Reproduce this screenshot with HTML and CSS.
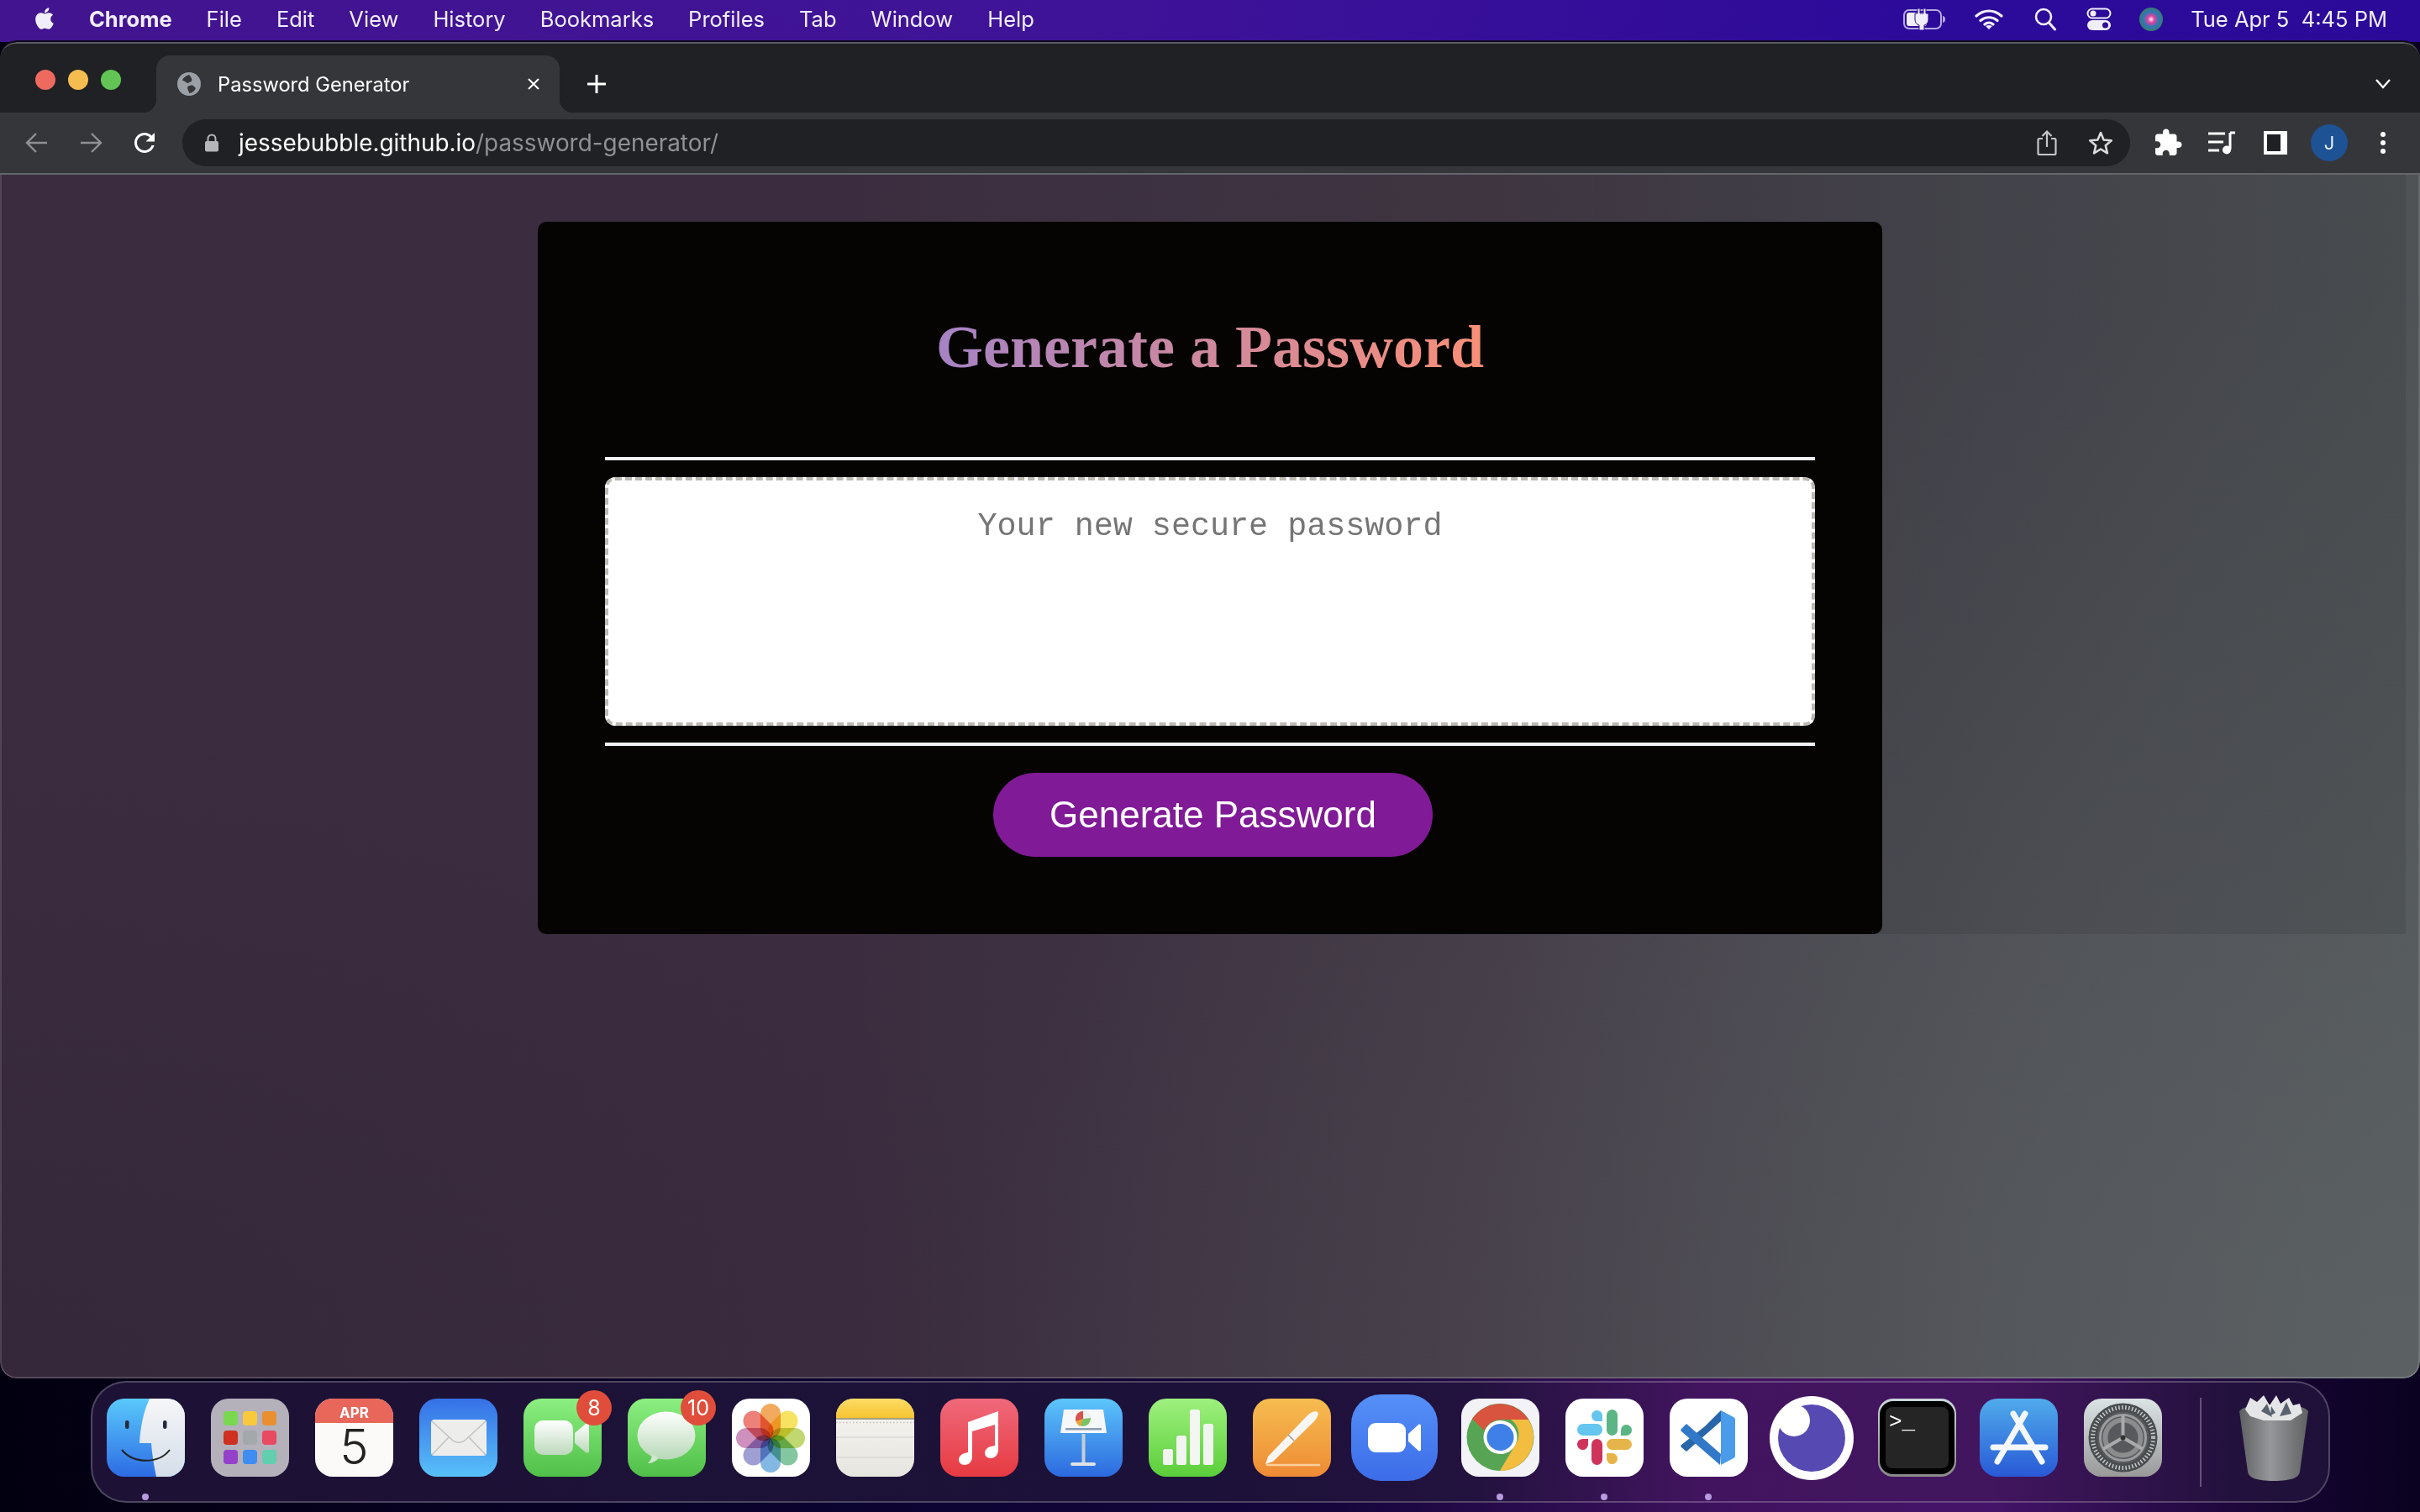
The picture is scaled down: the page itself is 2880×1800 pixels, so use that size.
FILE: index.html
```html
<!DOCTYPE html>
<html lang="en">
<head>
<meta charset="utf-8">
<title>Password Generator</title>
<link rel="stylesheet" href="styles.css">
</head>
<body>
<div class="desktop">
  <header class="menubar">
    <svg class="apple" viewBox="0 0 24 24"><path fill="#f1eefb" d="M17.05 20.28c-.98.95-2.05.8-3.08.35-1.09-.46-2.09-.48-3.24 0-1.44.62-2.2.44-3.06-.35C2.79 15.25 3.51 7.59 9.05 7.31c1.35.07 2.29.74 3.08.8 1.18-.24 2.31-.93 3.57-.84 1.51.12 2.65.72 3.4 1.8-3.12 1.87-2.38 5.98.48 7.13-.57 1.5-1.31 2.99-2.54 4.09zM12.03 7.25c-.15-2.23 1.66-4.07 3.74-4.25.29 2.58-2.34 4.5-3.74 4.25z"/></svg>
    <nav class="menus">
      <span class="menu-app">Chrome</span><span>File</span><span>Edit</span><span>View</span><span>History</span><span>Bookmarks</span><span>Profiles</span><span>Tab</span><span>Window</span><span>Help</span>
    </nav>
    <div class="status">
      <svg class="st-battery" viewBox="0 0 52 26"><rect x="1" y="2" width="44" height="22" rx="6" fill="none" stroke="#b5a9e0" stroke-width="2"/><path d="M47 9c2 0 3 2 3 4s-1 4-3 4z" fill="#b5a9e0"/><rect x="4" y="5" width="24" height="16" rx="3" fill="#f1eefb"/><path d="M17 0h3v6h4V0h3v6h3v7c0 4-2 6-5 7v6h-6v-6c-3-1-5-3-5-7V6h3z" fill="#f1eefb" stroke="#2c0c98" stroke-width="1"/></svg>
      <svg class="st-wifi" viewBox="0 0 34 26"><path d="M2 9c9-8 21-8 30 0M7 14.500c6-5 14-5 20 0M12 19c3-2.500 7-2.500 10 0" fill="none" stroke="#f1eefb" stroke-width="3.200" stroke-linecap="round"/><path d="M17 25l-4-4c2.500-1.500 5.500-1.500 8 0z" fill="#f1eefb"/></svg>
      <svg class="st-search" viewBox="0 0 26 28"><circle cx="11" cy="11" r="9" fill="none" stroke="#f1eefb" stroke-width="2.600"/><path d="M17.500 18l7 8" stroke="#f1eefb" stroke-width="3" stroke-linecap="round"/></svg>
      <svg class="st-control" viewBox="0 0 30 28"><rect x="1.500" y="1.500" width="27" height="11" rx="5.500" fill="none" stroke="#f1eefb" stroke-width="2"/><circle cx="8" cy="7" r="3.500" fill="#f1eefb"/><rect x="1" y="15" width="28" height="12" rx="6" fill="#f1eefb"/><circle cx="22.500" cy="21" r="3.500" fill="#2c0c98"/></svg>
      <svg class="st-siri" viewBox="0 0 28 28"><defs><radialGradient id="siri"><stop offset="0" stop-color="#f7e9ff"/><stop offset=".3" stop-color="#e0429c"/><stop offset=".65" stop-color="#2a78b8"/><stop offset="1" stop-color="#3d7a6e"/></radialGradient></defs><circle cx="14" cy="14" r="14" fill="url(#siri)"/></svg>
      <span class="clock">Tue Apr 5&nbsp; 4:45 PM</span>
    </div>
  </header>

  <main class="window">
    <div class="titlebar">
      <div class="lights"><i class="light red"></i><i class="light yellow"></i><i class="light green"></i></div>
      <div class="tab">
        <svg class="favicon" viewBox="0 0 28 28"><circle cx="14" cy="14" r="14" fill="#9aa0a6"/><path d="M14 3c-3 1-7 3-8 7 3 0 4 2 6 3 2 0 3-2 5-2 1-2 0-5-3-8zM19 16c-3-1-6 0-7 2 0 3 2 4 2 7 3 0 7-3 8-6-1-1-2-2-3-3z" fill="#35363a"/></svg>
        <span class="tab-title">Password Generator</span>
        <svg class="tab-close" viewBox="0 0 16 16"><path d="M2 2l12 12M14 2L2 14" stroke="#fff" stroke-width="2"/></svg>
      </div>
      <svg class="newtab" viewBox="0 0 24 24"><path d="M12 1v22M1 12h22" stroke="#fff" stroke-width="3"/></svg>
      <svg class="tabs-menu" viewBox="0 0 20 14"><path d="M2 2l8 9 8-9" fill="none" stroke="#fff" stroke-width="2.400"/></svg>
    </div>
    <div class="toolbar">
      <div class="slot"><svg class="ico28" viewBox="0 0 28 28"><path d="M26 14H3M13 3L2 14l11 11" fill="none" stroke="#8f9195" stroke-width="2.400"/></svg></div>
      <div class="slot"><svg class="ico28" viewBox="0 0 28 28"><path d="M2 14h23M15 3l11 11-11 11" fill="none" stroke="#8f9195" stroke-width="2.400"/></svg></div>
      <div class="slot"><svg class="ico34" viewBox="0 0 24 24"><path fill="#fff" d="M17.650 6.350C16.200 4.900 14.210 4 12 4c-4.420 0-7.990 3.580-7.990 8s3.570 8 7.990 8c3.730 0 6.840-2.550 7.730-6h-2.080c-.82 2.330-3.040 4-5.650 4-3.310 0-6-2.690-6-6s2.690-6 6-6c1.660 0 3.140.69 4.220 1.780L13 11h7V4l-2.350 2.350z"/></svg></div>
      <div class="omnibox">
        <svg class="lock" viewBox="0 0 18 22"><path d="M4.500 9V6a4.500 4.500 0 0 1 9 0v3" fill="none" stroke="#b4b6b9" stroke-width="2"/><rect x="1" y="9" width="16" height="12.500" rx="2" fill="#b4b6b9"/></svg>
        <div class="url"><span class="host">jessebubble.github.io</span><span class="path">/password-generator/</span></div>
        <div class="omni-actions">
          <div class="slot"><svg class="ico-share" viewBox="0 0 24 32"><path d="M7 11H3a1.500 1.500 0 0 0-1.500 1.500v16A1.500 1.500 0 0 0 3 30h18a1.500 1.500 0 0 0 1.500-1.500v-16A1.500 1.500 0 0 0 21 11h-4M12 21V3M6.500 8L12 2.500 17.500 8" fill="none" stroke="#c6c7c9" stroke-width="2.200"/></svg></div>
          <div class="slot"><svg class="ico-star" viewBox="0 0 30 30"><path d="M15 3l3.600 8.500 9.200.8-7 6 2.100 9L15 22.500 7.100 27.300l2.100-9-7-6 9.200-.8z" fill="none" stroke="#dadbdc" stroke-width="2.600" stroke-linejoin="round"/></svg></div>
        </div>
      </div>
      <div class="slot"><svg class="ico34" viewBox="0 0 24 24"><path fill="#fff" d="M20.500 11H19V7c0-1.100-.9-2-2-2h-4V3.500C13 2.120 11.880 1 10.500 1S8 2.120 8 3.500V5H4c-1.100 0-1.990.9-1.990 2v3.800H3.500c1.490 0 2.700 1.210 2.700 2.700s-1.210 2.700-2.700 2.700H2V20c0 1.100.9 2 2 2h3.800v-1.500c0-1.490 1.210-2.700 2.700-2.700 1.490 0 2.700 1.210 2.700 2.700V22H17c1.100 0 2-.9 2-2v-4h1.500c1.380 0 2.500-1.120 2.500-2.500S21.880 11 20.500 11z"/></svg></div>
      <div class="slot"><svg class="ico-media" viewBox="0 0 34 28"><path d="M1 3h20M1 13h18M1 23h13" stroke="#fff" stroke-width="3"/><path d="M27 2h6M27 2v20" fill="none" stroke="#fff" stroke-width="3"/><ellipse cx="23" cy="22.500" rx="5" ry="5" fill="#fff"/></svg></div>
      <div class="slot"><div class="ico-side"></div></div>
      <div class="slot"><div class="avatar">J</div></div>
      <div class="slot"><svg class="ico-dots" viewBox="0 0 8 28"><circle cx="4" cy="4" r="3" fill="#fff"/><circle cx="4" cy="14" r="3" fill="#fff"/><circle cx="4" cy="24" r="3" fill="#fff"/></svg></div>
    </div>
    <div class="viewport">
      <div class="page">
        <section class="card">
          <h1 class="card-head"><span class="gradient-title">Generate a Password</span></h1>
          <hr class="rule">
          <div class="password-box">Your new secure password</div>
          <hr class="rule rule-low">
          <div class="card-foot"><button class="generate" type="button">Generate Password</button></div>
        </section>
      </div>
    </div>
  </main>

  <footer class="dock">
    <div class="app dot"><svg viewBox="0 0 93 93"><defs><linearGradient id="fb" x1="0" y1="0" x2="0" y2="1"><stop offset="0" stop-color="#5ac9fb"/><stop offset="1" stop-color="#2d6be4"/></linearGradient><linearGradient id="fw" x1="0" y1="0" x2="0" y2="1"><stop offset="0" stop-color="#f6f6f8"/><stop offset="1" stop-color="#d4deea"/></linearGradient></defs><rect width="93" height="93" rx="21" fill="url(#fb)"/><path d="M51 0h21a21 21 0 0 1 21 21v51a21 21 0 0 1-21 21H59c-3-13-5-27-6-40H39c1-20 5-38 12-53z" fill="url(#fw)"/><rect x="22" y="26" width="4.500" height="10" rx="2.200" fill="#222a3c"/><rect x="67" y="26" width="4.500" height="10" rx="2.200" fill="#222a3c"/><path d="M18 61c14 17 44 17 57 0" fill="none" stroke="#222" stroke-width="2"/></svg></div>
    <div class="app"><svg viewBox="0 0 93 93"><rect width="93" height="93" rx="21" fill="#b4b1bb"/><rect x="15" y="15" width="17" height="17" rx="4" fill="#79d750"/><rect x="38" y="15" width="17" height="17" rx="4" fill="#f8c93d"/><rect x="61" y="15" width="17" height="17" rx="4" fill="#e98f30"/><rect x="15" y="38" width="17" height="17" rx="4" fill="#cf3120"/><rect x="38" y="38" width="17" height="17" rx="4" fill="#a3a8ab"/><rect x="61" y="38" width="17" height="17" rx="4" fill="#e84a62"/><rect x="15" y="61" width="17" height="17" rx="4" fill="#9440c9"/><rect x="38" y="61" width="17" height="17" rx="4" fill="#3f8df1"/><rect x="61" y="61" width="17" height="17" rx="4" fill="#61cfae"/></svg></div>
    <div class="app"><svg viewBox="0 0 93 93"><rect width="93" height="93" rx="21" fill="#fbfaf8"/><path d="M0 29V21A21 21 0 0 1 21 0h51a21 21 0 0 1 21 21v8z" fill="#e8665a"/><text class="cal-month" x="46.500" y="23" text-anchor="middle">APR</text><text class="cal-day" x="46.500" y="78" text-anchor="middle">5</text></svg></div>
    <div class="app"><svg viewBox="0 0 93 93"><defs><linearGradient id="ml" x1="0" y1="0" x2="0" y2="1"><stop offset="0" stop-color="#3570e6"/><stop offset="1" stop-color="#58c0f9"/></linearGradient></defs><rect width="93" height="93" rx="21" fill="url(#ml)"/><rect x="14" y="25" width="66" height="43" rx="4" fill="#ededec"/><path d="M15 27l25 23c4 3 10 3 14 0l25-23M15 67l20-21M79 67L59 46" fill="none" stroke="#c2c2c2" stroke-width="1.500"/></svg></div>
    <div class="app"><svg viewBox="0 0 93 93"><defs><linearGradient id="fa" x1="0" y1="0" x2="0" y2="1"><stop offset="0" stop-color="#8bef81"/><stop offset="1" stop-color="#50bf48"/></linearGradient><linearGradient id="fc" x1="0" y1="0" x2="0" y2="1"><stop offset="0" stop-color="#fff"/><stop offset="1" stop-color="#bcd9bc"/></linearGradient></defs><rect width="93" height="93" rx="21" fill="url(#fa)"/><rect x="13" y="26" width="46" height="41" rx="10" fill="url(#fc)"/><path d="M61 41l13-11c2-1.500 4-.5 4 2v30c0 2.500-2 3.500-4 2L61 53z" fill="url(#fc)"/></svg><span class="badge">8</span></div>
    <div class="app"><svg viewBox="0 0 93 93"><defs><linearGradient id="ma" x1="0" y1="0" x2="0" y2="1"><stop offset="0" stop-color="#8bef81"/><stop offset="1" stop-color="#50bf48"/></linearGradient><linearGradient id="mc" x1="0" y1="0" x2="0" y2="1"><stop offset="0" stop-color="#fff"/><stop offset="1" stop-color="#b7d8b7"/></linearGradient></defs><rect width="93" height="93" rx="21" fill="url(#ma)"/><ellipse cx="46" cy="44" rx="34.500" ry="28.500" fill="url(#mc)"/><path d="M29 66c0 4-2 8-5 11 5 0 9-2 13-6z" fill="#cfe6cf"/></svg><span class="badge">10</span></div>
    <div class="app"><svg viewBox="0 0 93 93"><rect width="93" height="93" rx="21" fill="#fff"/><g class="petals"><rect x="34" y="6" width="24" height="41" rx="12" fill="#f0993a"/><rect x="34" y="6" width="24" height="41" rx="12" fill="#f6dc3e" transform="rotate(45 46 47)"/><rect x="34" y="6" width="24" height="41" rx="12" fill="#b3cf50" transform="rotate(90 46 47)"/><rect x="34" y="6" width="24" height="41" rx="12" fill="#69b98a" transform="rotate(135 46 47)"/><rect x="34" y="6" width="24" height="41" rx="12" fill="#67a8e0" transform="rotate(180 46 47)"/><rect x="34" y="6" width="24" height="41" rx="12" fill="#8b8acb" transform="rotate(225 46 47)"/><rect x="34" y="6" width="24" height="41" rx="12" fill="#c379b0" transform="rotate(270 46 47)"/><rect x="34" y="6" width="24" height="41" rx="12" fill="#e9645a" transform="rotate(315 46 47)"/></g></svg></div>
    <div class="app"><svg viewBox="0 0 93 93"><defs><linearGradient id="ny" x1="0" y1="0" x2="0" y2="1"><stop offset="0" stop-color="#fddc66"/><stop offset="1" stop-color="#f7c430"/></linearGradient><linearGradient id="nb" x1="0" y1="0" x2="0" y2="1"><stop offset="0" stop-color="#f6f5f1"/><stop offset="1" stop-color="#e6e5df"/></linearGradient></defs><rect width="93" height="93" rx="21" fill="url(#nb)"/><path d="M0 23v-2A21 21 0 0 1 21 0h51a21 21 0 0 1 21 21v2z" fill="url(#ny)"/><path d="M0 24h93" stroke="#a89f86" stroke-width="2"/><path d="M0 28.500h93" stroke="#c3c1ba" stroke-width="1.500" stroke-dasharray="1.500 2.500"/><path d="M0 46h93M0 70h93" stroke="#dadad6" stroke-width="1.500"/></svg></div>
    <div class="app"><svg viewBox="0 0 93 93"><defs><linearGradient id="mu" x1="0" y1="0" x2="0" y2="1"><stop offset="0" stop-color="#f0697b"/><stop offset="1" stop-color="#e63a41"/></linearGradient></defs><rect width="93" height="93" rx="21" fill="url(#mu)"/><path d="M33 28l36-13v46c0 6-4 10-9 10-4 0-7-3-7-6 0-4 3-7 7-8l5-1V31L38 39v30c0 6-4 10-9 10-4 0-7-3-7-6 0-4 3-7 7-8l4-1z" fill="#fff"/></svg></div>
    <div class="app"><svg viewBox="0 0 93 93"><defs><linearGradient id="kn" x1="0" y1="0" x2="0" y2="1"><stop offset="0" stop-color="#5cc5fb"/><stop offset="1" stop-color="#2c69df"/></linearGradient></defs><rect width="93" height="93" rx="21" fill="url(#kn)"/><rect x="44.500" y="42" width="4" height="36" fill="#c5ced6"/><rect x="31" y="76" width="30" height="4" rx="2" fill="#dfe3e6"/><path d="M23 13h47l4 28H19z" fill="#f6f7f9"/><rect x="25" y="35" width="43" height="2.500" fill="#8a9db3"/><circle cx="46" cy="24" r="9" fill="#7cc266"/><path d="M46 24V15a9 9 0 0 0-8.500 12z" fill="#d9534f"/><path d="M46 24l-8.500 3a9 9 0 0 0 5 6z" fill="#f0a23a"/><path d="M46 24V15a9 9 0 0 1 9 8z" fill="#f1f1f1"/></svg></div>
    <div class="app"><svg viewBox="0 0 93 93"><defs><linearGradient id="nu" x1="0" y1="0" x2="0" y2="1"><stop offset="0" stop-color="#9ef07e"/><stop offset="1" stop-color="#5bce3a"/></linearGradient></defs><rect width="93" height="93" rx="21" fill="url(#nu)"/><rect x="17" y="60" width="12" height="19" rx="2.500" fill="#f1f4ef"/><rect x="33" y="44" width="12" height="35" rx="2.500" fill="#f1f4ef"/><rect x="49" y="13" width="12" height="66" rx="2.500" fill="#f4f6f2"/><rect x="65" y="30" width="12" height="49" rx="2.500" fill="#f1f4ef"/></svg></div>
    <div class="app"><svg viewBox="0 0 93 93"><defs><linearGradient id="pg" x1="0" y1="0" x2="0" y2="1"><stop offset="0" stop-color="#f6bd50"/><stop offset="1" stop-color="#ee8b35"/></linearGradient></defs><rect width="93" height="93" rx="21" fill="url(#pg)"/><path d="M17 79h62" stroke="#f9cf9c" stroke-width="2.600" stroke-linecap="round"/><path d="M15 78l3-9L65 20c4-4 10-6 12-4 2 3-1 8-5 12L24 75z" fill="#f7f6f3"/><path d="M42 43l7 7" stroke="#9a9a94" stroke-width="1.500"/></svg></div>
    <div class="app app-wide"><svg viewBox="0 0 103 103"><defs><linearGradient id="zm" x1="0" y1="0" x2="0" y2="1"><stop offset="0" stop-color="#5590f7"/><stop offset="1" stop-color="#3c6ce8"/></linearGradient></defs><rect width="103" height="103" rx="35" fill="url(#zm)"/><rect x="20" y="34" width="45" height="35" rx="9" fill="#fff"/><path d="M68 47l12-11c1.500-1 3-.5 3 1.500v28c0 2-1.500 2.500-3 1.500L68 56z" fill="#fff"/></svg></div>
    <div class="app dot"><svg viewBox="0 0 93 93"><rect width="93" height="93" rx="21" fill="#f3f2f6"/><circle cx="46.500" cy="46" r="40" fill="#57a554"/><path d="M13 24A40 40 0 0 1 80 25H46.500a21 21 0 0 0-19 13z" fill="#d8543e"/><path d="M80 25a40 40 0 0 1-34 61l19-32a21 21 0 0 0-6-29z" fill="#f3bd40"/><circle cx="46.500" cy="46" r="20" fill="#fff"/><circle cx="46.500" cy="46" r="16" fill="#3f7fe8"/></svg></div>
    <div class="app dot"><svg viewBox="0 0 93 93"><rect width="93" height="93" rx="21" fill="#fff"/><rect x="14" y="30" width="30" height="14" rx="7" fill="#64c5ee"/><path d="M44 27v-7a6.500 6.500 0 1 0-6.500 7z" fill="#64c5ee"/><rect x="49" y="13" width="13" height="31" rx="6.500" fill="#5bb585"/><path d="M66 44h7a6.500 6.500 0 1 0-7-6.500z" fill="#5bb585"/><rect x="49" y="48" width="30" height="13" rx="6.500" fill="#e6b54a"/><path d="M49 65v7a6.500 6.500 0 1 0 6.500-7z" fill="#e6b54a"/><rect x="31" y="48" width="13" height="31" rx="6.500" fill="#cf335c"/><path d="M27 48h-6.500a6.500 6.500 0 1 0 6.500 7z" fill="#cf335c"/></svg></div>
    <div class="app dot"><svg viewBox="0 0 93 93"><rect width="93" height="93" rx="21" fill="#fff"/><path d="M61 14v13L20 63l-6-5c-1-1-1-2 0-3l28-22z" fill="#2866a9"/><path d="M14 36c-1 1-1 2 0 3l46 40 1-13L20 30z" fill="#3179c8"/><path d="M61 14l15 8c1.500 1 2 2 2 3v43c0 1-.5 2-2 3l-15 8z" fill="#4a9bea"/></svg></div>
    <div class="app app-orbit"><svg viewBox="0 0 100 100"><circle cx="50" cy="50" r="50" fill="#fff"/><circle cx="50" cy="50" r="40" fill="#564ab2"/><circle cx="29" cy="29" r="19" fill="#fff"/></svg></div>
    <div class="app app-term"><svg viewBox="0 0 93 93"><defs><linearGradient id="tm" x1="0" y1="0" x2="0" y2="1"><stop offset="0" stop-color="#c9d6da"/><stop offset="1" stop-color="#8a8a88"/></linearGradient></defs><rect width="93" height="93" rx="18" fill="url(#tm)"/><rect x="2" y="3" width="89" height="87" rx="16" fill="#000"/><rect x="9" y="10" width="75" height="73" rx="8" fill="#252525"/><text class="term-text" x="13" y="35">&gt;_</text></svg></div>
    <div class="app"><svg viewBox="0 0 93 93"><defs><linearGradient id="as" x1="0" y1="0" x2="0" y2="1"><stop offset="0" stop-color="#50abeb"/><stop offset="1" stop-color="#2859d6"/></linearGradient></defs><rect width="93" height="93" rx="21" fill="url(#as)"/><path d="M40 18l34 57M54 18L21 75" stroke="#f4f7fb" stroke-width="7" stroke-linecap="round"/><path d="M16 58h62" stroke="#f4f7fb" stroke-width="7" stroke-linecap="round"/></svg></div>
    <div class="app"><svg viewBox="0 0 93 93"><defs><linearGradient id="sp" x1="0" y1="0" x2="0" y2="1"><stop offset="0" stop-color="#dbe3e5"/><stop offset="1" stop-color="#999"/></linearGradient></defs><rect width="93" height="93" rx="21" fill="url(#sp)"/><circle cx="46.500" cy="46.500" r="41" fill="#4a4d50"/><circle cx="46.500" cy="46.500" r="36" fill="none" stroke="#c9cbcc" stroke-width="5" stroke-dasharray="1.500 2.500"/><circle cx="46.500" cy="46.500" r="31" fill="#57595c"/><circle cx="46.500" cy="46.500" r="27" fill="none" stroke="#9a9c9e" stroke-width="3"/><circle cx="46.500" cy="46.500" r="21" fill="none" stroke="#8a8c8e" stroke-width="6"/><path d="M46.500 46.500V20M46.500 46.500L70 60M46.500 46.500L23 60" stroke="#a8aaab" stroke-width="4"/><circle cx="46.500" cy="46.500" r="3" fill="#333"/></svg></div>
    <div class="dock-sep"></div>
    <div class="app app-trash"><svg viewBox="0 0 82 107"><defs><linearGradient id="tr" x1="0" y1="0" x2="1" y2="0"><stop offset="0" stop-color="#5e6062"/><stop offset=".45" stop-color="#95979a"/><stop offset="1" stop-color="#5f6163"/></linearGradient></defs><path d="M0 24c4-6 20-8 41-8s37 2 41 8l-10 72c-1 7-10 11-31 11S11 103 10 96z" fill="url(#tr)"/><path d="M7 22l6-14 8 5 8-8 7 12 8-12 5 10 10-7 5 9 8-2 3 11-14 9-32 0-16-5z" fill="#e4e5e6"/><path d="M26 24l7-9 6 16zM48 30l8-17 6 14zM38 18l5 8-6 3z" fill="#5a6270"/></svg></div>
  </footer>
</div>
</body>
</html>
```

FILE: styles.css
```css
* { box-sizing: border-box; }
html, body { margin: 0; padding: 0; }
body { width: 2880px; height: 1800px; overflow: hidden; font-family: "Inter", "Liberation Sans", sans-serif; }

.desktop {
  width: 2880px;
  height: 1800px;
  display: flex;
  flex-direction: column;
  background: linear-gradient(90deg, #02000f 0%, #0b0330 35%, #15053c 55%, #40125f 72%, #45146a 82%, #14042f 95%, #0a0220 100%);
}

/* Menu bar */
.menubar {
  height: 50px;
  flex: none;
  display: flex;
  align-items: center;
  padding: 0 39px 5px 36px;
  background: linear-gradient(90deg, #42148f 0%, #3f1398 45%, #2c0a9a 80%, #2b0a99 100%);
  color: #f1eefb;
  font-size: 25.500px;
}
.apple { width: 34px; height: 34px; margin-top: -2px; }
.menus { display: flex; gap: 41px; margin-left: 36px; }
.menu-app { font-weight: 700; }
.status { margin-left: auto; display: flex; align-items: center; }
.st-battery { width: 52px; height: 26px; }
.st-wifi { width: 34px; height: 26px; margin-left: 33px; }
.st-search { width: 26px; height: 28px; margin-left: 37px; }
.st-control { width: 30px; height: 28px; margin-left: 36px; }
.st-siri { width: 28px; height: 28px; margin-left: 33px; }
.clock { margin-left: 33px; white-space: nowrap; }

/* Window */
.window {
  height: 1591px;
  flex: none;
  display: flex;
  flex-direction: column;
  border-radius: 20px;
  overflow: hidden;
  box-shadow: 0 -2px 0 #100a20;
}
.titlebar {
  height: 84px;
  flex: none;
  display: flex;
  align-items: flex-end;
  background: #202124;
  border-top: 2px solid #5b5c5f;
  border-radius: 20px 20px 0 0;
}
.lights { display: flex; gap: 15px; align-self: flex-start; margin: 31px 0 0 42px; }
.light { width: 24px; height: 24px; border-radius: 50%; }
.red { background: #ee6a5f; }
.yellow { background: #f5bd4f; }
.green { background: #61c454; }
.tab {
  width: 480px;
  height: 68px;
  margin-left: 42px;
  background: #35363a;
  border-radius: 16px 16px 0 0;
  display: flex;
  align-items: center;
  padding: 0 24px 0 25px;
  color: #fff;
  font-size: 23.700px;
  position: relative;
}
.tab::before,
.tab::after {
  content: "";
  position: absolute;
  bottom: 0;
  width: 16px;
  height: 16px;
}
.tab::before { left: -16px; background: radial-gradient(circle at 0 0, transparent 16px, #35363a 16.500px); }
.tab::after { right: -16px; background: radial-gradient(circle at 100% 0, transparent 16px, #35363a 16.500px); }
.favicon { width: 28px; height: 28px; flex: none; }
.tab-title { margin-left: 20px; white-space: nowrap; }
.tab-close { width: 16px; height: 16px; margin-left: auto; margin-right: -1px; }
.newtab { width: 24px; height: 24px; margin: 0 0 22px 32px; }
.tabs-menu { width: 20px; height: 14px; margin: 0 34px 27px auto; }

/* Toolbar */
.toolbar {
  height: 74px;
  flex: none;
  display: flex;
  align-items: flex-start;
  padding: 0 12px;
  background: #35363a;
  border-bottom: 2px solid #65666a;
}
.slot { width: 64px; height: 72px; flex: none; display: flex; align-items: center; justify-content: center; }
.ico28 { width: 28px; height: 28px; }
.ico34 { width: 36px; height: 36px; }
.ico-share { width: 24px; height: 32px; }
.ico-star { width: 30px; height: 30px; }
.ico-media { width: 34px; height: 28px; }
.ico-side { width: 28px; height: 28px; border: 4px solid #fff; border-right-width: 8px; background: #202124; }
.ico-dots { width: 8px; height: 28px; }
.avatar {
  width: 44px;
  height: 44px;
  border-radius: 50%;
  background: #1d5294;
  color: #e8eef8;
  font-size: 22px;
  display: flex;
  align-items: center;
  justify-content: center;
}
.omnibox {
  flex: 1;
  height: 56px;
  margin: 8px 13px 0;
  border-radius: 28px;
  background: #202124;
  display: flex;
  align-items: center;
  padding: 0 3px 0 26px;
}
.lock { width: 18px; height: 22px; flex: none; }
.url { margin-left: 23px; font-size: 27.900px; white-space: nowrap; }
.host { color: #fff; }
.path { color: #8f9195; }
.omni-actions { margin-left: auto; display: flex; height: 56px; align-items: center; }

/* Page */
.viewport {
  flex: 1;
  box-shadow: inset 0 -2px 0 rgba(255,255,255,.16), inset 2px 0 0 rgba(255,255,255,.12), inset -2px 0 0 rgba(255,255,255,.12);
  border-radius: 0 0 20px 20px;
  background:
    radial-gradient(ellipse 1750px 1300px at 100% 100%, rgba(105,113,113,.48), rgba(105,113,113,0) 100%),
    radial-gradient(ellipse 1300px 800px at 0 100%, rgba(30,20,40,.22), rgba(30,20,40,0) 100%),
    linear-gradient(90deg, #3b2d3f 0%, #3b2d3f 35%, #413844 62%, #494951 82%, #4f5356 100%);
}
.page {
  width: 2863px;
  height: 904px;
  padding: 56px 0 0 640px;
  background: linear-gradient(90deg, rgba(0,0,0,0) 40%, rgba(0,0,0,.09) 80%);
}
.card {
  width: 1600px;
  height: 848px;
  padding: 0 80px;
  background: #050403;
  border-radius: 10px;
  display: flex;
  flex-direction: column;
}
.card-head {
  height: 280px;
  margin: 0;
  padding-top: 112px;
  text-align: center;
  font-family: "Liberation Serif", serif;
  font-weight: 700;
  font-size: 72px;
  line-height: 74px;
}
.gradient-title {
  display: inline-block;
  background: linear-gradient(90deg, #a683c4, #f98f77);
  -webkit-background-clip: text;
  background-clip: text;
  color: transparent;
}
.rule { height: 4px; margin: 0; border: 0; background: #f0f2f5; flex: none; }
.password-box {
  height: 296px;
  margin-top: 20px;
  padding-top: 33px;
  flex: none;
  background: #fff;
  border: 4px dashed #bdb9b3;
  border-radius: 12px;
  text-align: center;
  color: #757575;
  font-family: "Liberation Mono", monospace;
  font-size: 38.400px;
  font-weight: 400;
  line-height: 44px;
}
.rule-low { margin-top: 20px; }
.card-foot { display: flex; justify-content: center; padding: 32px 0 0 7px; }
.generate {
  width: 523px;
  height: 100px;
  border: 0;
  border-radius: 50px;
  background: #801a96;
  color: #fff;
  font-family: "Liberation Sans", sans-serif;
  font-size: 44px;
}

/* Dock */
.dock {
  width: 2665px;
  height: 145px;
  flex: none;
  margin: 3px 0 0 108px;
  padding: 19px 0 0 17px;
  display: flex;
  align-items: flex-start;
  gap: 31px;
  border-radius: 42px;
  border: 2px solid rgba(255,255,255,.22);
  background: linear-gradient(90deg, #1d1235 0%, #1c1138 50%, #23123f 62%, #42145f 72%, #42155f 85%, #22113c 96%, #1e1138 100%);
}
.app { width: 93px; height: 93px; flex: none; position: relative; }
.app > svg { display: block; width: 100%; height: 100%; }
.app-wide > svg { width: 103px; height: 103px; margin: -5px 0 0 -7px; }
.app-orbit > svg { width: 100px; height: 100px; margin: -3px 0 0 -5px; }
.app-term { margin-right: -3px; }
.app-trash { width: 82px; height: 107px; margin: -9px 0 0 14px; }
.dot::after {
  content: "";
  position: absolute;
  left: 42px;
  top: 113px;
  width: 8px;
  height: 8px;
  border-radius: 50%;
  background: #b79ae0;
}
.badge {
  position: absolute;
  top: -10px;
  right: -12px;
  width: 42px;
  height: 42px;
  border-radius: 50%;
  background: #e04e3b;
  color: #fff;
  font-size: 25px;
  display: flex;
  align-items: center;
  justify-content: center;
}
.dock-sep { width: 2px; height: 106px; flex: none; margin: -1px 0 0 14px; background: rgba(255,255,255,.28); }
.cal-month { font-family: "Inter", sans-serif; font-weight: 700; font-size: 17px; fill: #fff; }
.cal-day { font-family: "Inter", sans-serif; font-weight: 300; font-size: 58px; fill: #222; }
.term-text { font-family: "Liberation Mono", monospace; font-size: 26px; fill: #fff; }
.petals rect { opacity: .82; mix-blend-mode: multiply; }
```
